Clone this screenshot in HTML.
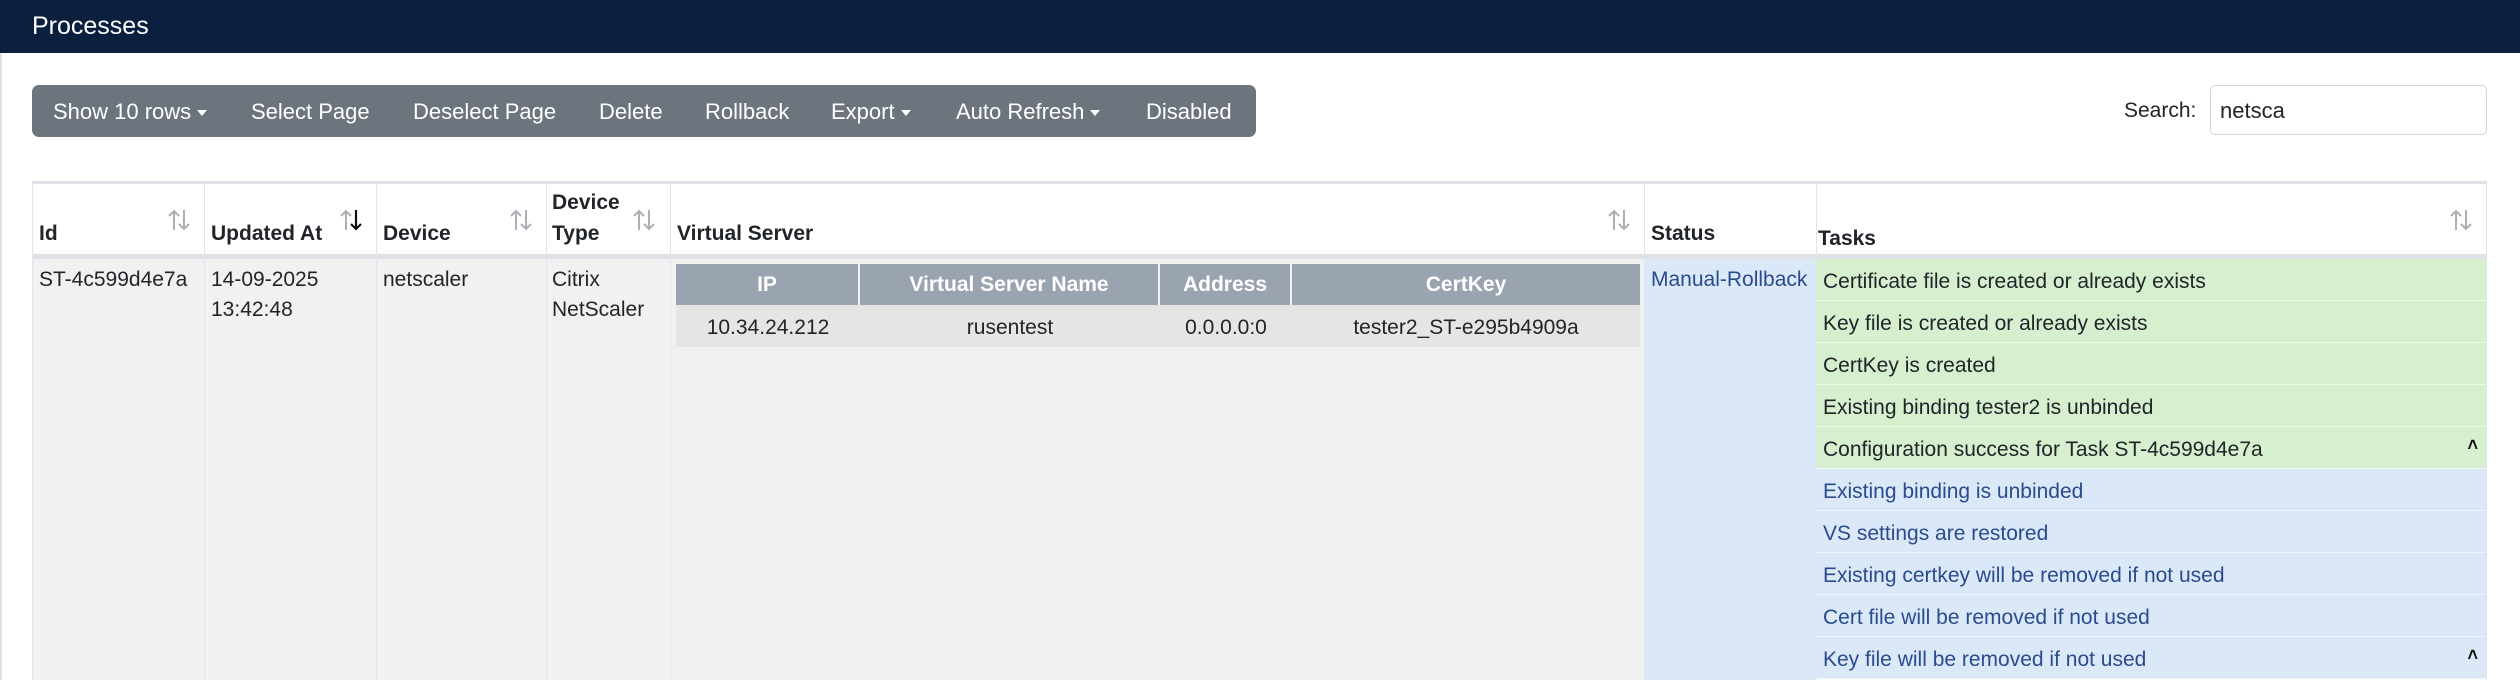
<!DOCTYPE html>
<html><head><meta charset="utf-8"><style>
*{box-sizing:border-box;margin:0;padding:0}
body{width:2520px;height:680px;overflow:hidden;background:#fff;font-family:"Liberation Sans",sans-serif;color:#212529;position:relative}
.a{position:absolute;white-space:nowrap}
.hdr{left:0;top:0;width:2520px;height:53px;background:#0b1f3f}
.tb{left:32px;top:85px;width:1224px;height:52px;background:#6c757d;border-radius:7px}
.tb span{position:absolute;top:14px;color:#fff;font-size:22px}
.car{display:inline-block;border-left:5px solid transparent;border-right:5px solid transparent;border-top:6px solid #fff;vertical-align:middle;margin-left:6px}
.th{font-weight:bold;font-size:21px}
.vl{position:absolute;top:183px;width:1px;height:497px;background:#e1e4e8}
.td{font-size:21px}
.task{position:absolute;left:1816px;width:670px;height:42px;font-size:21px;padding:11px 0 0 7px;border-bottom:1px solid rgba(255,255,255,.6)}
.g{background:#d6efcf;color:#212529}
.b{background:#dae8f8;color:#2a4b8d}
.nh{position:absolute;top:264px;height:41px;background:#9aa4b1;color:#fff;font-weight:bold;font-size:21px;text-align:center;padding-top:9px;border-right:2px solid #f1f1f1}
.nd{position:absolute;top:305px;height:42px;background:#e5e5e5;font-size:21px;text-align:center;padding-top:11px}
.chev{position:absolute;right:8px;top:8px;font-size:18px;color:#111;font-weight:bold}
.s{position:absolute;top:208px}
</style></head><body>
<div class="a hdr"></div>
<div class="a" style="left:32px;top:12px;color:#fff;font-size:25px">Processes</div>
<div class="a" style="left:0;top:53px;width:2px;height:627px;background:#dee2e6"></div>
<div class="a tb">
<span style="left:21px">Show 10 rows<i class="car"></i></span>
<span style="left:219px">Select Page</span>
<span style="left:381px">Deselect Page</span>
<span style="left:567px">Delete</span>
<span style="left:673px">Rollback</span>
<span style="left:799px">Export<i class="car"></i></span>
<span style="left:924px">Auto Refresh<i class="car"></i></span>
<span style="left:1114px">Disabled</span>
</div>
<div class="a" style="left:2124px;top:99px;font-size:21px">Search:</div>
<div class="a" style="left:2210px;top:85px;width:277px;height:50px;border:1px solid #ced4da;border-radius:5px;font-size:22px;padding:12px 0 0 9px">netsca</div>

<div class="a" style="left:32px;top:181px;width:2455px;height:3px;background:#dee2e6"></div>
<div class="a" style="left:32px;top:254px;width:2455px;height:5px;background:#dee2e6"></div>
<div class="a" style="left:32px;top:259px;width:1612px;height:421px;background:#f1f1f1"></div>
<div class="a" style="left:1644px;top:259px;width:172px;height:421px;background:#dae8f8"></div>
<div class="vl" style="left:32px"></div><div class="vl" style="left:204px"></div><div class="vl" style="left:376px"></div><div class="vl" style="left:546px"></div><div class="vl" style="left:670px"></div><div class="vl" style="left:1644px"></div><div class="vl" style="left:1816px"></div><div class="vl" style="left:2486px"></div>

<div class="a th" style="left:39px;top:222px">Id</div>
<div class="a th" style="left:211px;top:222px">Updated At</div>
<div class="a th" style="left:383px;top:222px">Device</div>
<div class="a th" style="left:552px;top:191px">Device</div>
<div class="a th" style="left:552px;top:222px">Type</div>
<div class="a th" style="left:677px;top:222px">Virtual Server</div>
<div class="a th" style="left:1651px;top:222px">Status</div>
<div class="a th" style="left:1818px;top:227px">Tasks</div>

<svg class="s" style="left:168px" width="22" height="24" viewBox="0 0 22 24"><g fill="none" stroke="#aab0b6" stroke-width="2"><path d="M6 22V3M1 8l5-5 5 5"/><path d="M16 2v19M11 16l5 5 5-5"/></g></svg>
<svg class="s" style="left:340px" width="22" height="24" viewBox="0 0 22 24"><path d="M6 22V3M1 8l5-5 5 5" fill="none" stroke="#aab0b6" stroke-width="2"/><path d="M16 2v19M11 16l5 5 5-5" fill="none" stroke="#111" stroke-width="2.2"/></svg>
<svg class="s" style="left:510px" width="22" height="24" viewBox="0 0 22 24"><g fill="none" stroke="#aab0b6" stroke-width="2"><path d="M6 22V3M1 8l5-5 5 5"/><path d="M16 2v19M11 16l5 5 5-5"/></g></svg>
<svg class="s" style="left:633px" width="22" height="24" viewBox="0 0 22 24"><g fill="none" stroke="#aab0b6" stroke-width="2"><path d="M6 22V3M1 8l5-5 5 5"/><path d="M16 2v19M11 16l5 5 5-5"/></g></svg>
<svg class="s" style="left:1608px" width="22" height="24" viewBox="0 0 22 24"><g fill="none" stroke="#aab0b6" stroke-width="2"><path d="M6 22V3M1 8l5-5 5 5"/><path d="M16 2v19M11 16l5 5 5-5"/></g></svg>
<svg class="s" style="left:2450px" width="22" height="24" viewBox="0 0 22 24"><g fill="none" stroke="#aab0b6" stroke-width="2"><path d="M6 22V3M1 8l5-5 5 5"/><path d="M16 2v19M11 16l5 5 5-5"/></g></svg>

<div class="a td" style="left:39px;top:268px">ST-4c599d4e7a</div>
<div class="a td" style="left:211px;top:268px">14-09-2025</div>
<div class="a td" style="left:211px;top:298px">13:42:48</div>
<div class="a td" style="left:383px;top:268px">netscaler</div>
<div class="a td" style="left:552px;top:268px">Citrix</div>
<div class="a td" style="left:552px;top:298px">NetScaler</div>
<div class="a td" style="left:1651px;top:268px;color:#2a4b8d">Manual-Rollback</div>

<div class="nh" style="left:676px;width:184px">IP</div>
<div class="nh" style="left:860px;width:300px">Virtual Server Name</div>
<div class="nh" style="left:1160px;width:132px">Address</div>
<div class="nh" style="left:1292px;width:348px;border-right:0">CertKey</div>
<div class="nd" style="left:676px;width:184px">10.34.24.212</div>
<div class="nd" style="left:860px;width:300px">rusentest</div>
<div class="nd" style="left:1160px;width:132px">0.0.0.0:0</div>
<div class="nd" style="left:1292px;width:348px">tester2_ST-e295b4909a</div>

<div class="task g" style="top:259px">Certificate file is created or already exists</div>
<div class="task g" style="top:301px">Key file is created or already exists</div>
<div class="task g" style="top:343px">CertKey is created</div>
<div class="task g" style="top:385px">Existing binding tester2 is unbinded</div>
<div class="task g" style="top:427px">Configuration success for Task ST-4c599d4e7a<span class="chev">˄</span></div>
<div class="task b" style="top:469px">Existing binding is unbinded</div>
<div class="task b" style="top:511px">VS settings are restored</div>
<div class="task b" style="top:553px">Existing certkey will be removed if not used</div>
<div class="task b" style="top:595px">Cert file will be removed if not used</div>
<div class="task b" style="top:637px">Key file will be removed if not used<span class="chev">˄</span></div>
</body></html>
